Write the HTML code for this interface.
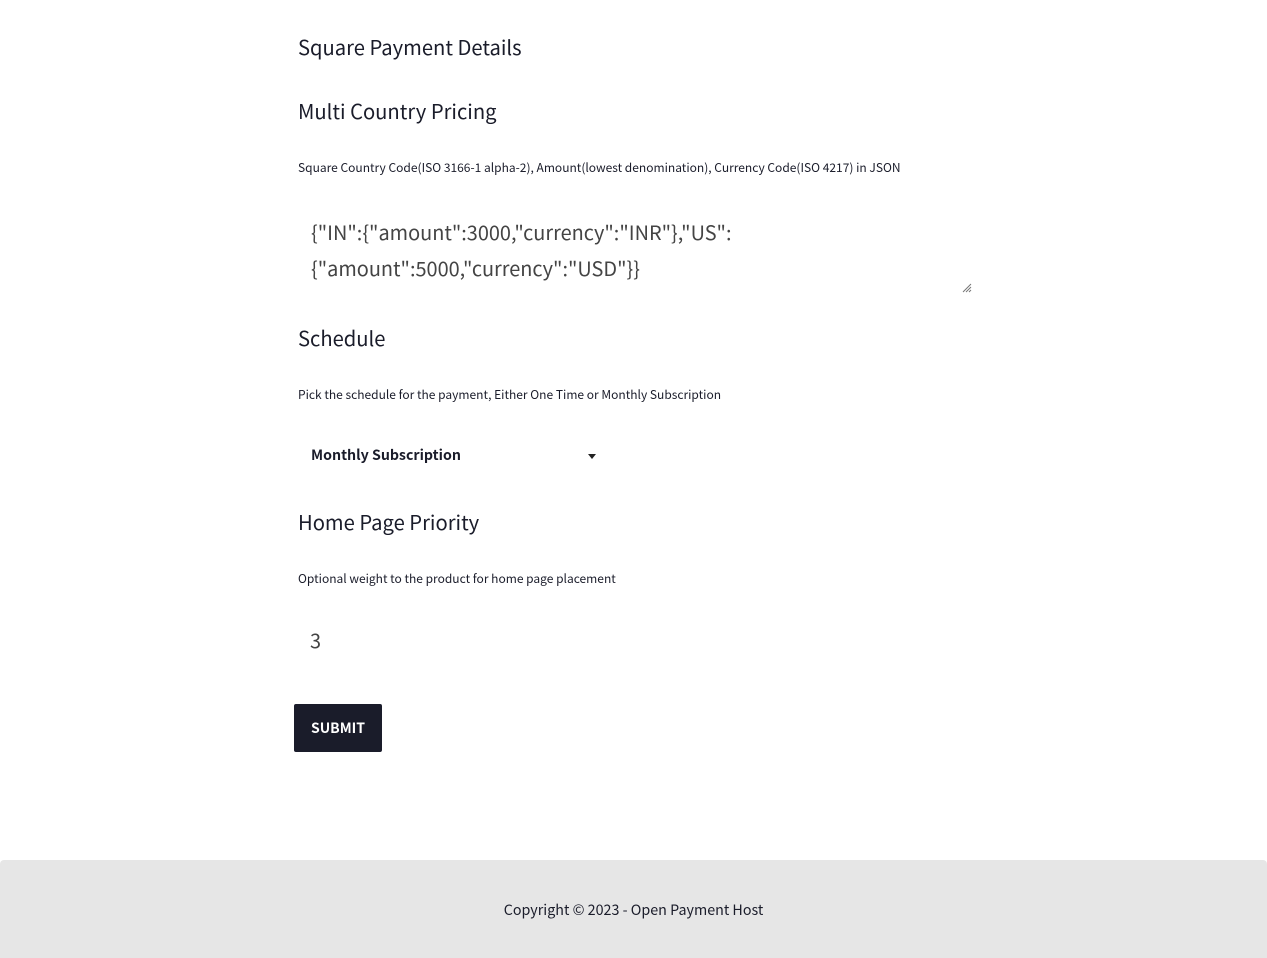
<!DOCTYPE html>
<html><head><meta charset="utf-8"><style>
*{margin:0;padding:0;box-sizing:border-box}
body{width:1267px;height:958px;background:#fff;position:relative;font-family:"Noto Sans CJK SC","Liberation Sans",sans-serif;color:#1a1c2a;overflow:hidden}
.a{position:absolute;white-space:nowrap;line-height:1}
h2{font-weight:400;font-size:20.2px}
.d{font-size:12px}
.t{font-size:19.9px;color:#444}
footer{position:absolute;left:0;top:860px;width:1267px;height:98px;background:#e6e6e6;border-radius:4px 4px 0 0}
</style></head><body>
<div class="a" style="left:298px;top:37px"><h2>Square Payment Details</h2></div>
<div class="a" style="left:298px;top:101px"><h2>Multi Country Pricing</h2></div>
<div class="a d" style="left:298px;top:162px">Square Country Code(ISO 3166-1 alpha-2), Amount(lowest denomination), Currency Code(ISO 4217) in JSON</div>
<div class="a t" style="left:311px;top:222px">{"IN":{"amount":3000,"currency":"INR"},"US":</div>
<div class="a t" style="left:311px;top:258px">{"amount":5000,"currency":"USD"}}</div>
<svg class="a" style="left:962px;top:283px" width="10" height="10"><path d="M9 1L1 9M9 4L4 9M9 7L7 9" stroke="#777" stroke-width="1"/></svg>
<div class="a" style="left:298px;top:328px"><h2>Schedule</h2></div>
<div class="a d" style="left:298px;top:389px">Pick the schedule for the payment, Either One Time or Monthly Subscription</div>
<div class="a" style="left:311px;top:448px;font-size:14.2px;font-weight:700">Monthly Subscription</div>
<svg class="a" style="left:588px;top:454px" width="8" height="5"><path d="M0 0H8L4 5Z" fill="#222"/></svg>
<div class="a" style="left:298px;top:512px"><h2>Home Page Priority</h2></div>
<div class="a d" style="left:298px;top:573px">Optional weight to the product for home page placement</div>
<div class="a t" style="left:310px;top:630px">3</div>
<div class="a" style="left:294px;top:704px;width:88px;height:48px;background:#1a1c2a;border-radius:2px;color:#fff;font-weight:700;font-size:14px;text-align:center;line-height:48px">SUBMIT</div>
<footer></footer>
<div class="a" style="left:0;width:1267px;text-align:center;top:903px;font-size:14.3px">Copyright © 2023 - Open Payment Host</div>
</body></html>
